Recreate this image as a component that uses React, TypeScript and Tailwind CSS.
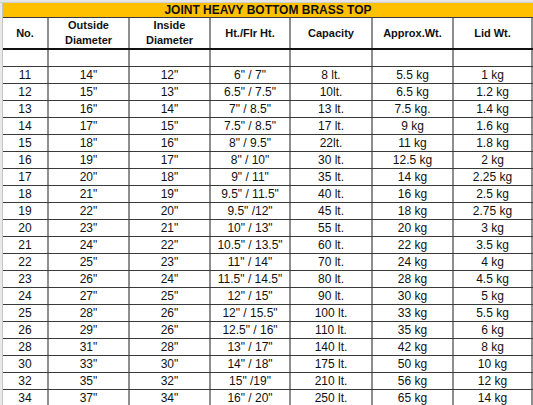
const rows: string[][] = [
  ["11", '14"', '12"', '6" / 7"', "8 lt.", "5.5 kg", "1 kg"],
  ["12", '15"', '13"', '6.5" / 7.5"', "10lt.", "6.5 kg", "1.2 kg"],
  ["13", '16"', '14"', '7" / 8.5"', "13 lt.", "7.5 kg.", "1.4 kg"],
  ["14", '17"', '15"', '7.5" / 8.5"', "17 lt.", "9 kg", "1.6 kg"],
  ["15", '18"', '16"', '8" / 9.5"', "22lt.", "11 kg", "1.8 kg"],
  ["16", '19"', '17"', '8" / 10"', "30 lt.", "12.5 kg", "2 kg"],
  ["17", '20"', '18"', '9" / 11"', "35 lt.", "14 kg", "2.25 kg"],
  ["18", '21"', '19"', '9.5" / 11.5"', "40 lt.", "16 kg", "2.5 kg"],
  ["19", '22"', '20"', '9.5" /12"', "45 lt.", "18 kg", "2.75 kg"],
  ["20", '23"', '21"', '10" / 13"', "55 lt.", "20 kg", "3 kg"],
  ["21", '24"', '22"', '10.5" / 13.5"', "60 lt.", "22 kg", "3.5 kg"],
  ["22", '25"', '23"', '11" / 14"', "70 lt.", "24 kg", "4 kg"],
  ["23", '26"', '24"', '11.5" / 14.5"', "80 lt.", "28 kg", "4.5 kg"],
  ["24", '27"', '25"', '12" / 15"', "90 lt.", "30 kg", "5 kg"],
  ["25", '28"', '26"', '12" / 15.5"', "100 lt.", "33 kg", "5.5 kg"],
  ["26", '29"', '26"', '12.5" / 16"', "110 lt.", "35 kg", "6 kg"],
  ["28", '31"', '28"', '13" / 17"', "140 lt.", "42 kg", "8 kg"],
  ["30", '33"', '30"', '14" / 18"', "175 lt.", "50 kg", "10 kg"],
  ["32", '35"', '32"', '15" /19"', "210 lt.", "56 kg", "12 kg"],
  ["34", '37"', '34"', '16" / 20"', "250 lt.", "65 kg", "14 kg"],
];

// column widths include the 2px right border
const cols = "grid grid-cols-[46px_81px_81px_80px_82px_81px_79px]";
const cell = "border-r-2 border-[#8e8e8e] flex items-center justify-center";

function Gutter({ active = false }: { active?: boolean }) {
  return (
    <div className="w-[3px] shrink-0 bg-[#e9e9e9] border-r border-[#c4c4c4] flex">
      {active && <div className="ml-[2px] w-[1px] bg-[#1e7a3c]" />}
    </div>
  );
}

export default function App() {
  return (
    <div
      className="w-[533px] h-[405px] overflow-hidden bg-white text-[#111]"
      style={{ fontFamily: '"Liberation Sans", Arial, sans-serif' }}
    >
      <div className="h-[3px] bg-[#e6e6e6] border-b border-[#cfcfcf]" />

      {/* title bar */}
      <div className="flex h-[15px]">
        <Gutter />
        <div className="flex-1 bg-[#ffc000] border-b border-[#3a3a3a] flex items-center justify-center text-[12px] font-bold leading-none">
          JOINT HEAVY BOTTOM BRASS TOP
        </div>
      </div>

      {/* header */}
      <div className="flex h-[32px]">
        <Gutter />
        <div className={`${cols} border-b-2 border-[#111] text-[11px] font-bold leading-[15px] text-center`}>
          <div className={cell}>No.</div>
          <div className={cell}>Outside<br />Diameter</div>
          <div className={cell}>Inside<br />Diameter</div>
          <div className={cell}>Ht./Flr Ht.</div>
          <div className={cell}>Capacity</div>
          <div className={cell}>Approx.Wt.</div>
          <div className={cell}>Lid Wt.</div>
        </div>
      </div>

      {/* blank spacer row */}
      <div className="flex h-[17px]">
        <Gutter />
        <div className={`${cols} border-b border-[#3a3a3a]`}>
          {Array.from({ length: 7 }).map((_, i) => (
            <div key={i} className={cell} />
          ))}
        </div>
      </div>

      {rows.map((r, ri) => (
        <div key={r[0]} className="flex h-[17px]">
          <Gutter active={ri === 1} />
          <div className={`${cols} border-b border-[#3a3a3a] text-[12px] leading-none`}>
            {r.map((v, ci) => (
              <div key={ci} className={`${cell} whitespace-pre`}>
                {v}
              </div>
            ))}
          </div>
        </div>
      ))}
    </div>
  );
}
